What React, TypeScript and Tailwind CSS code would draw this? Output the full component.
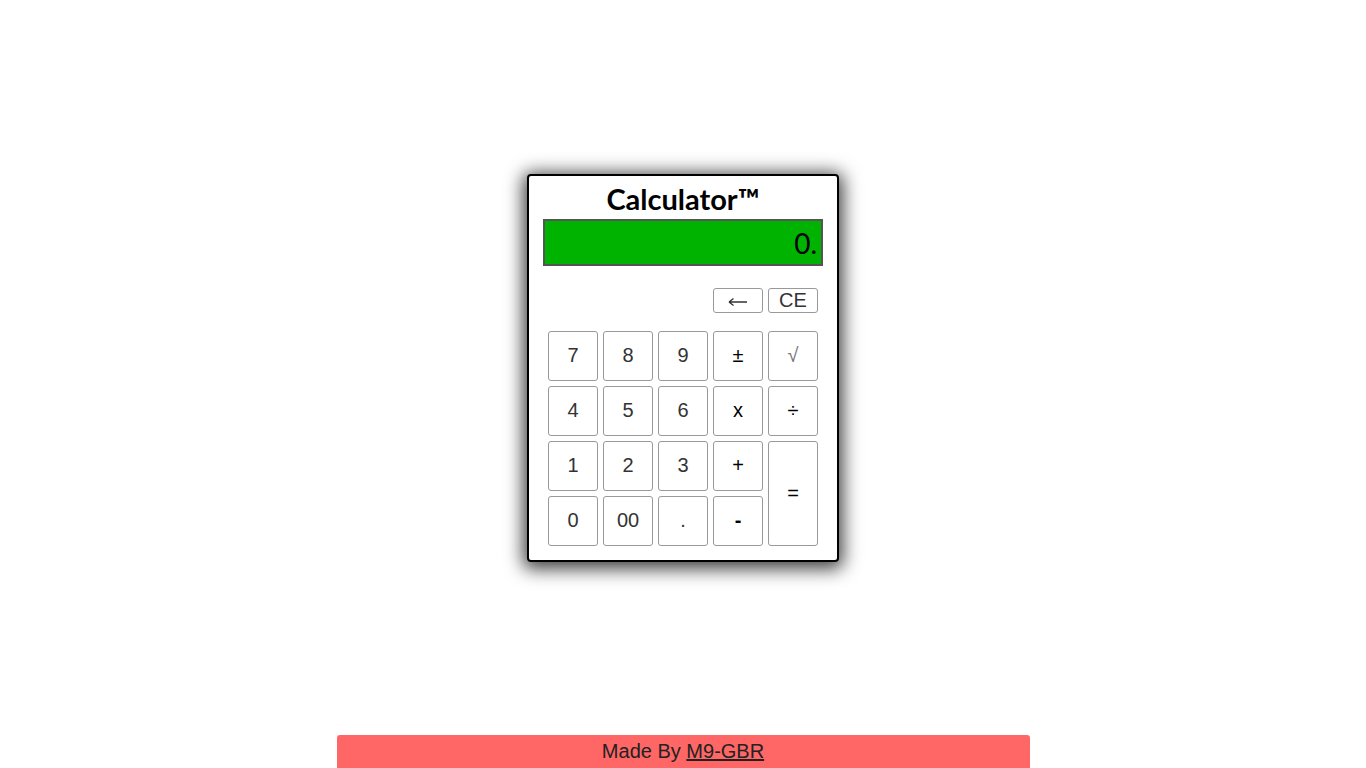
import React from "react";

const Btn = ({ label, className = "" }: { label: React.ReactNode; className?: string }) => (
  <button
    className={
      "flex items-center justify-center rounded-[3px] border border-[#999] bg-white pb-[2px] text-[20px] text-[#333] " +
      className
    }
    style={{ fontFamily: '"Liberation Sans", Arial, sans-serif' }}
  >
    {label}
  </button>
);

export default function App() {
  return (
    <div className="flex h-[768px] w-full flex-col overflow-hidden bg-white" style={{ fontFamily: '"Liberation Sans", Arial, sans-serif' }}>
      <div className="flex justify-center pt-[174px]">
        <div className="flex w-[312px] flex-col rounded-[4px] border-2 border-black bg-white px-[14px] pb-[14px] shadow-[0_3px_18px_4px_rgba(0,0,0,0.75)]">
          <div
            className="flex h-[43px] items-center justify-center pt-[2px] text-[29px] font-bold text-black"
            style={{ fontFamily: 'Lato, "Open Sans", sans-serif' }}
          >
            Calculator™
          </div>
          <div
            className="flex h-[47px] w-[280px] items-center justify-end border-2 border-[#555] bg-[#00b300] pr-[4px] text-[28px] text-black"
            style={{ fontFamily: 'Lato, "Open Sans", sans-serif' }}
          >
            0.
          </div>
          <div className="mt-[22px] flex justify-end gap-[5px] pr-[5px]">
            <Btn
              label={
                <svg width="20" height="10" viewBox="0 0 20 10" className="mt-[4px]">
                  <path d="M1 5 H19 M1 5 L5.5 1.5 M1 5 L5.5 8.5" stroke="#333" strokeWidth="1.3" fill="none" />
                </svg>
              }
              className="h-[25px] w-[50px] pb-0"
            />
            <Btn label="CE" className="h-[25px] w-[50px] pb-0" />
          </div>
          <div className="mx-auto mt-[18px] grid w-[270px] grid-cols-[repeat(5,50px)] grid-rows-[repeat(4,50px)] gap-[5px]">
            <Btn label="7" />
            <Btn label="8" />
            <Btn label="9" />
            <Btn label="±" className="text-black" />
            <Btn label="√" className="text-[#777]" />
            <Btn label="4" />
            <Btn label="5" />
            <Btn label="6" />
            <Btn label="x" className="text-black" />
            <Btn label="÷" className="text-black" />
            <Btn label="1" />
            <Btn label="2" />
            <Btn label="3" />
            <Btn label="+" className="text-black" />
            <Btn label="=" className="row-span-2 text-black" />
            <Btn label="0" />
            <Btn label="00" />
            <Btn label="." />
            <Btn label="-" className="font-bold text-black" />
          </div>
        </div>
      </div>
      <div className="mt-auto flex justify-center">
        <div className="flex h-[33px] w-[693px] items-center justify-center rounded-t-[3px] bg-[#ff6666] pb-[2px] text-[20px] text-[#222]">
          <span>
            Made By <a className="underline">M9-GBR</a>
          </span>
        </div>
      </div>
    </div>
  );
}
